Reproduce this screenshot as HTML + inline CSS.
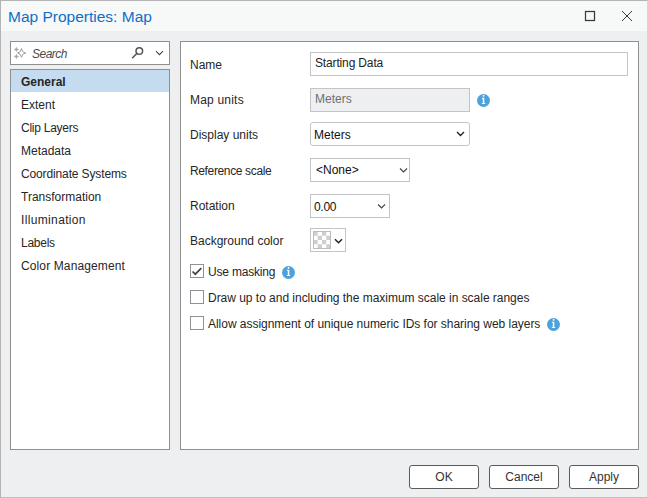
<!DOCTYPE html>
<html><head><meta charset="utf-8">
<style>
*{box-sizing:border-box;margin:0;padding:0}
html,body{width:648px;height:498px;overflow:hidden;background:#eeeff1}
body{font-family:"Liberation Sans",sans-serif;font-size:12px;color:#262626;position:relative}
.abs{position:absolute;white-space:nowrap}
#win{position:absolute;left:0;top:0;width:648px;height:498px;border-top:1px solid #b4b4b4;border-left:1px solid #b4b4b4;border-right:1px solid #d6d6d6;border-bottom:1px solid #c0c0c0;background:#eeeff1}
#title{position:absolute;left:0;top:0;width:646px;height:30px;background:#f7f8f8}
#title .t{position:absolute;left:7px;top:7px;font-size:15.5px;color:#0d70c6}
.panel{position:absolute;background:#fff;border:1px solid #8f8f8f}
.lbl{position:absolute;left:190px;white-space:nowrap}
.box{position:absolute;border:1px solid #c2c4c8;background:#fff}
.item{position:absolute;left:21px;white-space:nowrap}
.btn{position:absolute;top:465px;width:70px;height:24px;border:1px solid #5a5a5a;border-radius:3px;background:#fff;text-align:center;line-height:22px;color:#333}
.cb{position:absolute;left:190px;width:14px;height:14px;border:1px solid #909298;background:#fff}
svg{position:absolute;overflow:visible}
</style></head><body>
<div id="win">
  <div id="title"><div class="t">Map Properties: Map</div></div>
</div>
<!-- window buttons -->
<svg style="left:580px;top:8px" width="60" height="16" viewBox="0 0 60 16">
  <rect x="5.5" y="3.5" width="9" height="9" fill="none" stroke="#3a3a3a" stroke-width="1.25"/>
  <path d="M42 3 L52 13 M52 3 L42 13" stroke="#3a3a3a" stroke-width="1" fill="none"/>
</svg>

<!-- search -->
<div class="panel" style="left:10px;top:41px;width:160px;height:24px"></div>
<svg style="left:12px;top:44px" width="18" height="18" viewBox="0 0 18 18">
  <path d="M9.5 4.5 Q9.9 8.6 13.7 9 Q9.9 9.4 9.5 13.4 Q9.1 9.4 5.5 9 Q9.1 8.6 9.5 4.5Z" fill="none" stroke="#a0a0a0" stroke-width="1"/>
  <path d="M4.4 3.2 Q4.6 5.2 6.6 5.4 Q4.6 5.6 4.4 7.6 Q4.2 5.6 2.2 5.4 Q4.2 5.2 4.4 3.2Z M4.4 10.3 Q4.6 12.3 6.6 12.5 Q4.6 12.7 4.4 14.7 Q4.2 12.7 2.2 12.5 Q4.2 12.3 4.4 10.3Z" fill="#a8a8a8" stroke="#a8a8a8" stroke-width="0.5"/>
</svg>
<div class="abs" style="left:32px;top:47px;font-style:italic;color:#4a4a4a;font-size:12px;letter-spacing:-0.5px">Search</div>
<svg style="left:128px;top:44px" width="40" height="18" viewBox="0 0 40 18">
  <circle cx="11.3" cy="7" r="3.3" fill="none" stroke="#555" stroke-width="1.5"/>
  <path d="M9 9.3 L4.6 13.7" stroke="#555" stroke-width="1.6" stroke-linecap="round"/>
  <path d="M28 7.2 L31.5 10.7 L35 7.2" fill="none" stroke="#444" stroke-width="1.1"/>
</svg>

<!-- left list -->
<div class="panel" style="left:10px;top:69px;width:160px;height:381px"></div>
<div class="abs" style="left:11px;top:70px;width:158px;height:22px;background:#c5dcf0"></div>
<div class="item" style="top:75px;font-weight:bold">General</div>
<div class="item" style="top:98px">Extent</div>
<div class="item" style="top:121px;letter-spacing:-0.25px">Clip Layers</div>
<div class="item" style="top:144px">Metadata</div>
<div class="item" style="top:167px;letter-spacing:-0.13px">Coordinate Systems</div>
<div class="item" style="top:190px">Transformation</div>
<div class="item" style="top:213px;letter-spacing:0.35px">Illumination</div>
<div class="item" style="top:236px;letter-spacing:-0.25px">Labels</div>
<div class="item" style="top:259px;letter-spacing:0.12px">Color Management</div>

<!-- right panel -->
<div class="panel" style="left:180px;top:41px;width:459px;height:409px"></div>

<div class="lbl" style="top:58px">Name</div>
<div class="box" style="left:310px;top:52px;width:318px;height:24px"></div>
<div class="abs" style="left:315px;top:56px;color:#222;letter-spacing:-0.15px">Starting Data</div>

<div class="lbl" style="top:93px;letter-spacing:0.2px">Map units</div>
<div class="box" style="left:310px;top:88px;width:160px;height:24px;background:#eeeff1"></div>
<div class="abs" style="left:315px;top:92px;color:#6f6f6f">Meters</div>
<svg style="left:477px;top:94px" width="13" height="13" viewBox="0 0 13 13">
  <circle cx="6.5" cy="6.5" r="6.5" fill="#4ea2d9"/>
  <rect x="5.8" y="1.0" width="1.5" height="1.7" fill="#fff"/>
  <path d="M4.9 3.8 H7.3 V9.0 H8.2 V10.0 H4.8 V9.0 H5.8 V4.7 H4.9Z" fill="#fff"/>
</svg>

<div class="lbl" style="top:128px">Display units</div>
<div class="box" style="left:310px;top:122px;width:160px;height:24px;border-radius:3px"></div>
<div class="abs" style="left:314px;top:128px;color:#111">Meters</div>
<svg style="left:450px;top:126px" width="20" height="16" viewBox="0 0 20 16">
  <path d="M7 6 L10.5 9.5 L14 6" fill="none" stroke="#222" stroke-width="1.4"/>
</svg>

<div class="lbl" style="top:164px;letter-spacing:-0.36px">Reference scale</div>
<div class="box" style="left:310px;top:158px;width:100px;height:24px"></div>
<div class="abs" style="left:316px;top:163px;color:#111">&lt;None&gt;</div>
<svg style="left:390px;top:162px" width="20" height="16" viewBox="0 0 20 16">
  <path d="M10 6.5 L13.5 10 L17 6.5" fill="none" stroke="#444" stroke-width="1.1"/>
</svg>

<div class="lbl" style="top:199px">Rotation</div>
<div class="box" style="left:310px;top:194px;width:80px;height:24px"></div>
<div class="abs" style="left:314px;top:200px;color:#111;letter-spacing:-0.3px">0.00</div>
<svg style="left:370px;top:198px" width="20" height="16" viewBox="0 0 20 16">
  <path d="M8 6.5 L11.5 10 L15 6.5" fill="none" stroke="#444" stroke-width="1.1"/>
</svg>

<div class="lbl" style="top:234px">Background color</div>
<div class="box" style="left:310px;top:228px;width:36px;height:24px"></div>
<svg style="left:313px;top:231px" width="18" height="18" viewBox="0 0 18 18">
  <rect x="0" y="0" width="18" height="18" fill="#fff"/>
  <g fill="#cfcfcf">
    <rect x="0.5" y="0.5" width="4.25" height="4.25"/><rect x="9" y="0.5" width="4.25" height="4.25"/>
    <rect x="4.75" y="4.75" width="4.25" height="4.25"/><rect x="13.25" y="4.75" width="4.25" height="4.25"/>
    <rect x="0.5" y="9" width="4.25" height="4.25"/><rect x="9" y="9" width="4.25" height="4.25"/>
    <rect x="4.75" y="13.25" width="4.25" height="4.25"/><rect x="13.25" y="13.25" width="4.25" height="4.25"/>
  </g>
  <rect x="0.5" y="0.5" width="17" height="17" fill="none" stroke="#bdbdbd" stroke-width="1"/>
</svg>
<svg style="left:330px;top:234px" width="16" height="14" viewBox="0 0 16 14">
  <path d="M5 5.2 L8.5 8.7 L12 5.2" fill="none" stroke="#222" stroke-width="1.5"/>
</svg>

<div class="cb" style="top:264px"></div>
<svg style="left:190px;top:264px" width="14" height="14" viewBox="0 0 14 14">
  <path d="M2.5 7.5 L5.3 10.2 L11.3 4.2" fill="none" stroke="#444" stroke-width="1.7"/>
</svg>
<div class="abs" style="left:208px;top:265px;letter-spacing:-0.19px">Use masking</div>
<svg style="left:282px;top:266px" width="13" height="13" viewBox="0 0 13 13">
  <circle cx="6.5" cy="6.5" r="6.5" fill="#4ea2d9"/>
  <rect x="5.8" y="1.0" width="1.5" height="1.7" fill="#fff"/>
  <path d="M4.9 3.8 H7.3 V9.0 H8.2 V10.0 H4.8 V9.0 H5.8 V4.7 H4.9Z" fill="#fff"/>
</svg>
<div class="cb" style="top:290px"></div>
<div class="abs" style="left:208px;top:291px;letter-spacing:-0.025px">Draw up to and including the maximum scale in scale ranges</div>
<div class="cb" style="top:316px"></div>
<div class="abs" style="left:208px;top:317px;letter-spacing:-0.03px">Allow assignment of unique numeric IDs for sharing web layers</div>
<svg style="left:547px;top:318px" width="13" height="13" viewBox="0 0 13 13">
  <circle cx="6.5" cy="6.5" r="6.5" fill="#4ea2d9"/>
  <rect x="5.8" y="1.0" width="1.5" height="1.7" fill="#fff"/>
  <path d="M4.9 3.8 H7.3 V9.0 H8.2 V10.0 H4.8 V9.0 H5.8 V4.7 H4.9Z" fill="#fff"/>
</svg>

<div class="btn" style="left:409px">OK</div>
<div class="btn" style="left:489px">Cancel</div>
<div class="btn" style="left:569px">Apply</div>
</body></html>
